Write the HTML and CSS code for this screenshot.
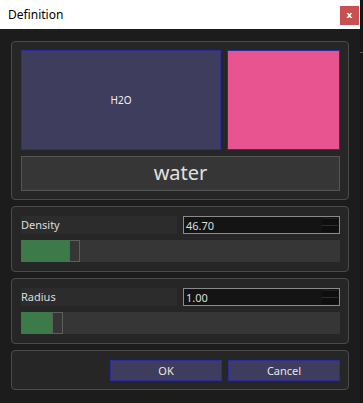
FILE: index.html
```html
<!DOCTYPE html>
<html lang="en">
<head>
  <meta charset="UTF-8">
  <title>Definition</title>
  <link rel="stylesheet" href="styles.css">
</head>
<body>

  <div class="screen">
    <div class="dialog">
      <div class="titlebar">
        <span class="title">Definition</span>
        <button class="close">x</button>
      </div>

      <div class="content">
        <div class="group preview">
          <div class="swatches">
            <div class="formula">H2O</div>
            <div class="color"></div>
          </div>
          <div class="name">water</div>
        </div>

        <div class="group">
          <div class="row">
            <div class="label">Density</div>
            <div class="field">
              <span>46.70</span>
              <span class="spin"></span>
            </div>
          </div>
          <div class="slider">
            <div class="fill" style="width: 48px"></div>
            <div class="handle"></div>
          </div>
        </div>

        <div class="group">
          <div class="row">
            <div class="label">Radius</div>
            <div class="field">
              <span>1.00</span>
              <span class="spin"></span>
            </div>
          </div>
          <div class="slider">
            <div class="fill" style="width: 31px"></div>
            <div class="handle"></div>
          </div>
        </div>

        <div class="group buttons">
          <button class="btn">OK</button>
          <button class="btn">Cancel</button>
        </div>
      </div>
    </div>
    <div class="behind">
      <div class="behind-line"></div>
    </div>
  </div>

</body>
</html>
```

FILE: styles.css
```css
* {
  box-sizing: border-box;
}

body {
  margin: 0;
  background: #1b1b1b;
  font-family: "Noto Sans", "Open Sans", sans-serif;
  font-size: 11px;
  color: #dcdcdc;
}

.screen {
  display: flex;
  width: 363px;
  height: 403px;
  overflow: hidden;
}

.dialog {
  width: 360px;
  height: 403px;
  background: #1c1c1c;
}

.behind {
  flex: 1;
  background: #161616;
  padding-top: 52px;
}

.behind-line {
  height: 1px;
  background: #555;
}

.titlebar {
  height: 29px;
  background: #fff;
  display: flex;
  align-items: center;
  justify-content: space-between;
  padding: 0 1px 0 8px;
}

.title {
  font-family: "Noto Sans", sans-serif;
  font-size: 12px;
  color: #000;
  margin-top: -1px;
}

.close {
  width: 19px;
  height: 19px;
  margin-top: 2px;
  border: none;
  padding: 0 0 2px;
  background: #c75050;
  color: #fff;
  font-family: "DejaVu Sans", sans-serif;
  font-size: 9px;
  font-weight: bold;
}

.content {
  padding: 12px 11px 0 11px;
  display: flex;
  flex-direction: column;
  gap: 6px;
}

.group {
  background: #262626;
  border: 1px solid #4b4b4b;
  border-radius: 4px;
  padding: 9px 8px 9px 9px;
  display: flex;
  flex-direction: column;
  gap: 6px;
}

.preview {
  padding-top: 8px;
  padding-bottom: 8px;
}

.swatches {
  display: flex;
  gap: 6px;
  height: 100px;
}

.formula {
  width: 200px;
  background: #3f3d5d;
  border: 1px solid #2c2c9c;
  display: flex;
  align-items: center;
  justify-content: center;
  font-size: 10px;
  color: #f0f0f0;
}

.color {
  flex: 1;
  background: #e8548f;
  border: 1px solid #2c2c9c;
}

.name {
  height: 35px;
  background: #363636;
  border: 1px solid #555;
  display: flex;
  align-items: center;
  justify-content: center;
  font-size: 20px;
  color: #e0e0e0;
  padding-bottom: 2px;
}

.row {
  display: flex;
  gap: 6px;
  height: 18px;
}

.label {
  flex: 0 0 156px;
  background: #2c2c2c;
  line-height: 18px;
}

.field {
  flex: 1;
  background: #141414;
  border: 1px solid #8a8a8a;
  display: flex;
  align-items: center;
  justify-content: space-between;
  padding: 0 1px 0 2px;
}

.spin {
  width: 16px;
  height: 14px;
  background: #0e0e0e;
  border-top: 1px solid #1e1e1e;
  position: relative;
}

.spin::after {
  content: "";
  position: absolute;
  left: 0;
  right: 0;
  top: 6px;
  height: 1px;
  background: #2e2e2e;
}

.slider {
  height: 22px;
  background: #363636;
  display: flex;
}

.fill {
  background: #3c7a4a;
}

.handle {
  width: 11px;
  border: 1px solid #5e5e5e;
}

.buttons {
  flex-direction: row;
  justify-content: flex-end;
  padding-bottom: 8px;
}

.btn {
  width: 112px;
  height: 21px;
  background: #3f3d5d;
  border: 1px solid #2c2c9c;
  color: #e6e6e6;
  font-family: "Noto Sans", sans-serif;
  font-size: 11px;
  padding: 0;
}
```
